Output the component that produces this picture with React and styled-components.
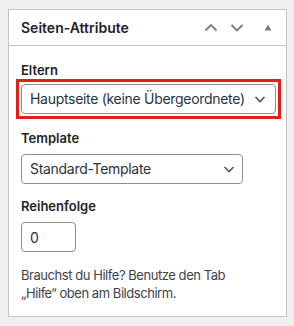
import React from "react";
import styled, { createGlobalStyle } from "styled-components";

const Global = createGlobalStyle`
  html, body { margin: 0; padding: 0; }
  body {
    background: #f0f0f1;
    font-family: Inter, "Noto Sans", "Liberation Sans", sans-serif;
    -webkit-font-smoothing: antialiased;
  }
`;

const Page = styled.div`
  padding: 9px 7px 9px 8px;
`;

const Panel = styled.section`
  width: 279px;
  box-sizing: border-box;
  background: #fff;
  border: 1px solid #c3c4c7;
`;

const Header = styled.header`
  display: flex;
  align-items: center;
  height: 35px;
  border-bottom: 1px solid #c3c4c7;
`;

const Title = styled.h2`
  flex: 1;
  margin: 0;
  padding: 1px 0 0 12px;
  font-size: 14px;
  font-weight: 600;
  line-height: 1.4;
  color: #1d2327;
`;

const HandleButton = styled.button`
  width: ${(p) => p.$w}px;
  height: 35px;
  padding: 0;
  margin: 0;
  border: 0;
  background: none;
  display: flex;
  align-items: center;
  justify-content: center;
  color: #787c82;
`;

const Inside = styled.div`
  display: flex;
  flex-direction: column;
  align-items: flex-start;
  padding: 15px 12px 14px;
`;

const Label = styled.p`
  margin: ${(p) => p.$mt}px 0 ${(p) => p.$mb}px;
  font-size: 13px;
  font-weight: 600;
  line-height: 18px;
  color: #1d2327;
`;

const Highlight = styled.div`
  margin: -5px;
  padding: 2px;
  border: 3px solid #e0201a;
`;

const Select = styled.div`
  box-sizing: border-box;
  width: ${(p) => p.$w}px;
  height: 30px;
  display: flex;
  align-items: center;
  justify-content: space-between;
  padding: 0 ${(p) => p.$pr}px 0 8px;
  border: 1px solid #8c8f94;
  border-radius: 4px;
  background: #fff;
  font-size: 14px;
  letter-spacing: -0.3px;
  line-height: 28px;
  color: #2c3338;
  white-space: nowrap;
`;

const NumberInput = styled.input`
  box-sizing: border-box;
  width: 55px;
  height: 30px;
  padding: 0 8px;
  margin: 0;
  border: 1px solid #8c8f94;
  border-radius: 4px;
  background: #fff;
  font-family: inherit;
  font-size: 14px;
  color: #2c3338;
`;

const Help = styled.p`
  margin: 14px 0 0;
  font-size: 13px;
  letter-spacing: -0.45px;
  line-height: 18px;
  color: #3c434a;
`;

const Chevron = ({ up }) => (
  <svg width="14" height="9" viewBox="0 0 14 9" aria-hidden="true">
    <path
      d={up ? "M1.5 7.5 L7 2 L12.5 7.5" : "M1.5 2 L7 7.5 L12.5 2"}
      fill="none"
      stroke="currentColor"
      strokeWidth="1.8"
    />
  </svg>
);

const Triangle = () => (
  <svg width="8" height="7" viewBox="0 0 8 7" aria-hidden="true">
    <path d="M0.5 6.5 L4 0.5 L7.5 6.5 Z" fill="currentColor" />
  </svg>
);

const SelectArrow = () => (
  <svg width="12" height="8" viewBox="0 0 12 8" aria-hidden="true">
    <path d="M1.5 2 L6 6.5 L10.5 2" fill="none" stroke="#50575e" strokeWidth="1.6" />
  </svg>
);

export default function App() {
  return (
    <>
      <Global />
      <Page>
        <Panel>
          <Header>
            <Title>Seiten-Attribute</Title>
            <HandleButton $w={26} aria-label="Nach oben">
              <Chevron up />
            </HandleButton>
            <HandleButton $w={26} aria-label="Nach unten">
              <Chevron />
            </HandleButton>
            <HandleButton $w={36} aria-label="Umschalten">
              <Triangle />
            </HandleButton>
          </Header>
          <Inside>
            <Label $mt={0} $mb={5}>Eltern</Label>
            <Highlight>
              <Select $w={255} $pr={9}>
                <span>Hauptseite (keine Übergeordnete)</span>
                <SelectArrow />
              </Select>
            </Highlight>
            <Label $mt={15} $mb={7}>Template</Label>
            <Select $w={222} $pr={7}>
              <span>Standard-Template</span>
              <SelectArrow />
            </Select>
            <Label $mt={13} $mb={7}>Reihenfolge</Label>
            <NumberInput type="text" value="0" readOnly />
            <Help>
              Brauchst du Hilfe? Benutze den Tab
              <br />
              „Hilfe“ oben am Bildschirm.
            </Help>
          </Inside>
        </Panel>
      </Page>
    </>
  );
}
